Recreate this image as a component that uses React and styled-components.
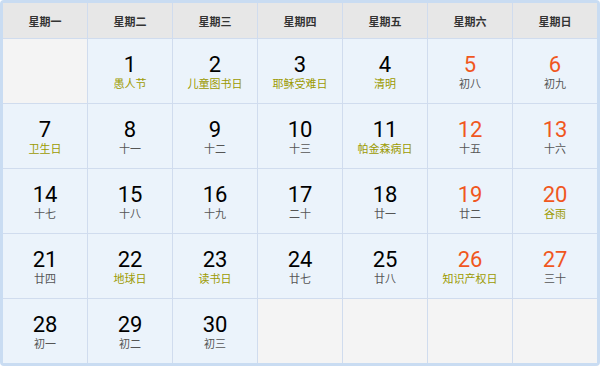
import styled, { createGlobalStyle } from "styled-components";

const GlobalStyle = createGlobalStyle`
  html, body {
    margin: 0;
    padding: 0;
    background: #fff;
  }
`;

const weekdays = ["星期一", "星期二", "星期三", "星期四", "星期五", "星期六", "星期日"];

// [day, text, festival?]
const days = [
  null,
  [1, "愚人节", true],
  [2, "儿童图书日", true],
  [3, "耶稣受难日", true],
  [4, "清明", true],
  [5, "初八"],
  [6, "初九"],
  [7, "卫生日", true],
  [8, "十一"],
  [9, "十二"],
  [10, "十三"],
  [11, "帕金森病日", true],
  [12, "十五"],
  [13, "十六"],
  [14, "十七"],
  [15, "十八"],
  [16, "十九"],
  [17, "二十"],
  [18, "廿一"],
  [19, "廿二"],
  [20, "谷雨", true],
  [21, "廿四"],
  [22, "地球日", true],
  [23, "读书日", true],
  [24, "廿七"],
  [25, "廿八"],
  [26, "知识产权日", true],
  [27, "三十"],
  [28, "初一"],
  [29, "初二"],
  [30, "初三"],
  null,
  null,
  null,
  null,
];

export default function App() {
  return (
    <>
      <GlobalStyle />
      <Calendar>
        {weekdays.map((w) => (
          <HeadCell key={w}>{w}</HeadCell>
        ))}
        {days.map((d, i) =>
          d ? (
            <DayCell key={i}>
              <DayNum $weekend={i % 7 >= 5}>{d[0]}</DayNum>
              <DayText $festival={d[2]}>{d[1]}</DayText>
            </DayCell>
          ) : (
            <EmptyCell key={i} />
          )
        )}
      </Calendar>
    </>
  );
}

const Calendar = styled.div`
  box-sizing: border-box;
  width: 600px;
  height: 366px;
  border: 3px solid #c9dcf2;
  border-radius: 4px;
  background: #d0dcee;
  display: grid;
  grid-template-columns: repeat(7, 1fr);
  grid-template-rows: 35px repeat(5, 1fr);
  gap: 1px;
  font-family: "Noto Sans CJK SC", "Open Sans", sans-serif;
`;

const HeadCell = styled.div`
  background: #e7e7e7;
  display: flex;
  align-items: center;
  justify-content: center;
  font-size: 11px;
  font-weight: bold;
  color: #333;
`;

const DayCell = styled.div`
  background: #ebf3fb;
  display: flex;
  flex-direction: column;
  align-items: center;
  justify-content: center;
  padding-top: 1px;
`;

const EmptyCell = styled.div`
  background: #f4f4f4;
`;

const DayNum = styled.div`
  font-family: Roboto, sans-serif;
  font-size: 22px;
  line-height: 26px;
  color: ${(p) => (p.$weekend ? "#f0571e" : "#000")};
`;

const DayText = styled.div`
  font-family: "Liberation Sans", "Noto Sans CJK SC", sans-serif;
  font-size: 11px;
  line-height: 13px;
  color: ${(p) => (p.$festival ? "#9c9a00" : "#555")};
`;
